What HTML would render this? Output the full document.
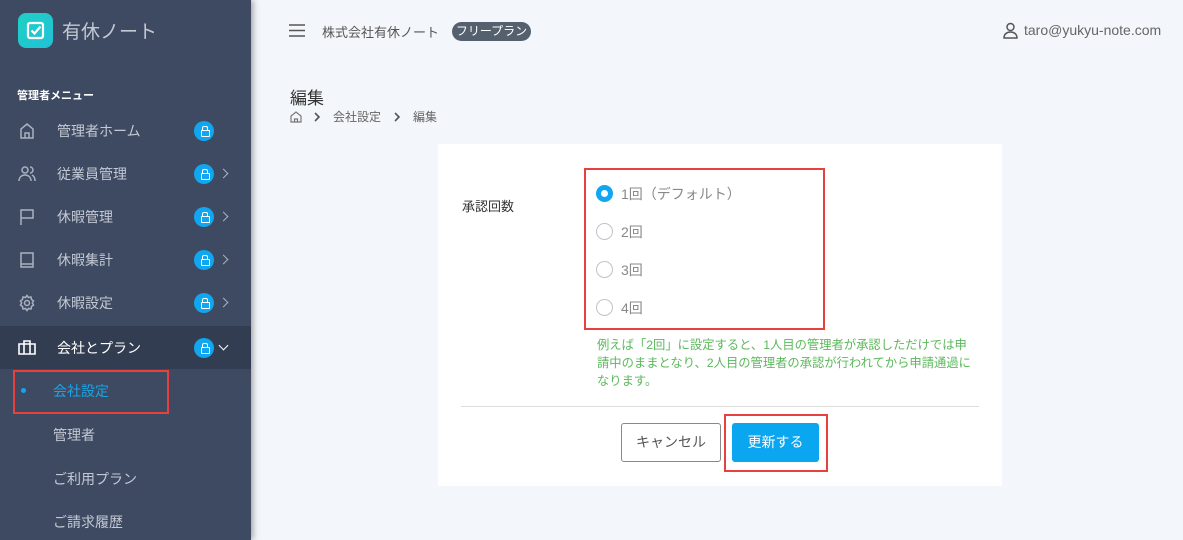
<!DOCTYPE html>
<html><head><meta charset="utf-8"><style>
*{box-sizing:border-box;margin:0;padding:0}
body{width:1183px;height:540px;overflow:hidden;background:#f3f6fa;font-family:"Liberation Sans","Noto Sans CJK JP",sans-serif;position:relative}
.sb{position:absolute;left:0;top:0;width:251px;height:540px;background:#3e4a62;box-shadow:2px 0 6px rgba(0,0,0,.35)}
.abs{position:absolute}
.logo{left:18px;top:13px;width:35px;height:35px;border-radius:8px;background:linear-gradient(135deg,#1fd0c4,#22c1d6)}
.nav{position:absolute;left:0;width:251px;height:43px;color:#c3c9d4;font-size:14px}
.nav .t{position:absolute;left:57px;top:50%;transform:translateY(-50%)}
.nav svg.i{position:absolute;left:18px;top:50%;transform:translateY(-50%)}
.lock{position:absolute;left:194px;top:50%;margin-top:-10px;width:20px;height:20px;border-radius:50%;background:#11a6f0}
.lock:before{content:"";position:absolute;left:6.5px;top:9px;width:7px;height:5px;border:1.3px solid #fff;border-radius:1px}
.lock:after{content:"";position:absolute;left:8px;top:5.5px;width:4px;height:4px;border:1.3px solid #fff;border-bottom:none;border-radius:2px 2px 0 0}
.chev{position:absolute;left:220px;top:50%;margin-top:-4px;width:7px;height:7px;border-right:1.5px solid #aab2c0;border-top:1.5px solid #aab2c0;transform:rotate(45deg)}
.sub{position:absolute;left:53px;color:#c3c9d4;font-size:14px}
.card{position:absolute;left:438px;top:144px;width:564px;height:342px;background:#fff}
.radio{position:absolute;left:596px;width:17px;height:17px;border-radius:50%;border:1px solid #bfc3c8;background:#fff}
.rl{position:absolute;left:621px;font-size:14px;color:#888}
.red{position:absolute;border:2.5px solid #e8403d}
.bc{position:absolute;top:108px;font-size:12px;color:#666}
</style></head><body>
<div class="sb">
<div class="abs logo"><svg width="35" height="35" viewBox="0 0 35 35"><rect x="10" y="10" width="15" height="15" rx="2" fill="none" stroke="#fff" stroke-width="2.2"/><path d="M13.5 17.5l3 3 6-7" fill="none" stroke="#fff" stroke-width="2.2"/></svg></div>
<div class="abs" style="left:62px;top:17px;font-size:19px;color:#c3c9d4">有休ノート</div>
<div class="abs" style="left:17px;top:87px;font-size:11px;color:#fff;font-weight:bold">管理者メニュー</div>
<div class="nav" style="top:109px"><svg class="i" width="18" height="18" viewBox="0 0 18 18" fill="none" stroke="#aab2c0" stroke-width="1.5"><path d="M3 16V7l6-5 6 5v9z M7 16v-5h4v5"/></svg><span class="t">管理者ホーム</span><span class="lock"></span></div>
<div class="nav" style="top:152px"><svg class="i" width="18" height="18" viewBox="0 0 18 18" fill="none" stroke="#aab2c0" stroke-width="1.5"><circle cx="7" cy="5" r="3"/><path d="M1 16c0-4 3-6 6-6s6 2 6 6M12 2a3 3 0 010 6M14 10c2 1 3 3 3 6"/></svg><span class="t">従業員管理</span><span class="lock"></span><span class="chev"></span></div>
<div class="nav" style="top:195px"><svg class="i" width="18" height="18" viewBox="0 0 18 18" fill="none" stroke="#aab2c0" stroke-width="1.5"><path d="M3 17V2h12v8H3"/></svg><span class="t">休暇管理</span><span class="lock"></span><span class="chev"></span></div>
<div class="nav" style="top:238px"><svg class="i" width="18" height="18" viewBox="0 0 18 18" fill="none" stroke="#aab2c0" stroke-width="1.5"><path d="M3 16V2h12v14zM3 13h12"/></svg><span class="t">休暇集計</span><span class="lock"></span><span class="chev"></span></div>
<div class="nav" style="top:281px"><svg class="i" width="18" height="18" viewBox="0 0 18 18" fill="none" stroke="#aab2c0" stroke-width="1.5"><circle cx="9" cy="9" r="2.5"/><path d="M9 1.5l1.5 2 2.5-.5.5 2.5 2 1.5-1.2 2 1.2 2-2 1.5-.5 2.5-2.5-.5L9 16.5l-1.5-2-2.5.5-.5-2.5-2-1.5 1.2-2-1.2-2 2-1.5.5-2.5 2.5.5z"/></svg><span class="t">休暇設定</span><span class="lock"></span><span class="chev"></span></div>
<div class="nav" style="top:326px;background:#333d52;color:#fff"><svg class="i" width="18" height="18" viewBox="0 0 18 18" fill="none" stroke="#fff" stroke-width="1.6"><path d="M1 5h16v10H1zM6 5V2h6v3M6 5v10M12 5v10"/></svg><span class="t">会社とプラン</span><span class="lock"></span><span class="chev" style="transform:rotate(135deg);margin-top:-6px;border-color:#fff"></span></div>
<div class="abs" style="left:21px;top:388px;width:5px;height:5px;border-radius:50%;background:#11a6f0"></div>
<div class="sub" style="top:381px;color:#1aa3e6">会社設定</div>
<div class="red" style="left:13px;top:370px;width:156px;height:44px"></div>
<div class="sub" style="top:425px">管理者</div>
<div class="sub" style="top:469px">ご利用プラン</div>
<div class="sub" style="top:512px">ご請求履歴</div>
</div>
<svg class="abs" style="left:289px;top:24px" width="16" height="13" viewBox="0 0 16 13" stroke="#555" stroke-width="1.6"><path d="M0 1h16M0 6.5h16M0 12h16"/></svg>
<div class="abs" style="left:322px;top:22px;font-size:13px;color:#555">株式会社有休ノート</div>
<div class="abs" style="left:452px;top:22px;width:79px;height:19px;border-radius:10px;background:#55606f;color:#fff;font-size:12px;text-align:center;line-height:19px">フリープラン</div>
<svg class="abs" style="left:1003px;top:22px" width="15" height="17" viewBox="0 0 15 17" fill="none" stroke="#555" stroke-width="1.5"><circle cx="7.5" cy="5" r="3.5"/><path d="M1 16c0-4 3-6 6.5-6s6.5 2 6.5 6z"/></svg>
<div class="abs" style="left:1024px;top:22px;font-size:14px;color:#666">taro@yukyu-note.com</div>
<div class="abs" style="left:290px;top:84px;font-size:17px;color:#333">編集</div>
<svg class="abs" style="left:290px;top:111px" width="12" height="12" viewBox="0 0 12 12" fill="none" stroke="#777" stroke-width="1.2"><path d="M1 11V5l5-4 5 4v6zM4.5 11V8h3v3"/></svg>
<svg class="abs" style="left:314px;top:112px" width="6" height="10" viewBox="0 0 6 10" fill="none" stroke="#555" stroke-width="1.6"><path d="M1 1l4 4-4 4"/></svg>
<div class="bc" style="left:333px">会社設定</div>
<svg class="abs" style="left:394px;top:112px" width="6" height="10" viewBox="0 0 6 10" fill="none" stroke="#555" stroke-width="1.6"><path d="M1 1l4 4-4 4"/></svg>
<div class="bc" style="left:413px">編集</div>
<div class="card"></div>
<div class="abs" style="left:462px;top:196px;font-size:13px;color:#333">承認回数</div>
<div class="radio" style="top:185px;border:5px solid #11a6f0"></div>
<div class="rl" style="top:184px">1回（デフォルト）</div>
<div class="radio" style="top:223px"></div><div class="rl" style="top:222px">2回</div>
<div class="radio" style="top:261px"></div><div class="rl" style="top:260px">3回</div>
<div class="radio" style="top:299px"></div><div class="rl" style="top:298px">4回</div>
<div class="red" style="left:584px;top:168px;width:241px;height:162px"></div>
<div class="abs" style="left:597px;top:336px;width:380px;font-size:12.3px;line-height:18px;color:#5cb85c">例えば「2回」に設定すると、1人目の管理者が承認しただけでは申請中のままとなり、2人目の管理者の承認が行われてから申請通過になります。</div>
<div class="abs" style="left:461px;top:406px;width:518px;height:1px;background:#ddd"></div>
<div class="abs" style="left:621px;top:423px;width:100px;height:39px;border:1px solid #888;border-radius:3px;background:#fff;color:#555;font-size:14px;text-align:center;line-height:37px">キャンセル</div>
<div class="abs" style="left:732px;top:423px;width:87px;height:39px;border-radius:3px;background:#0aa6f0;color:#fff;font-size:14px;text-align:center;line-height:39px">更新する</div>
<div class="red" style="left:724px;top:414px;width:104px;height:58px"></div>
</body></html>
